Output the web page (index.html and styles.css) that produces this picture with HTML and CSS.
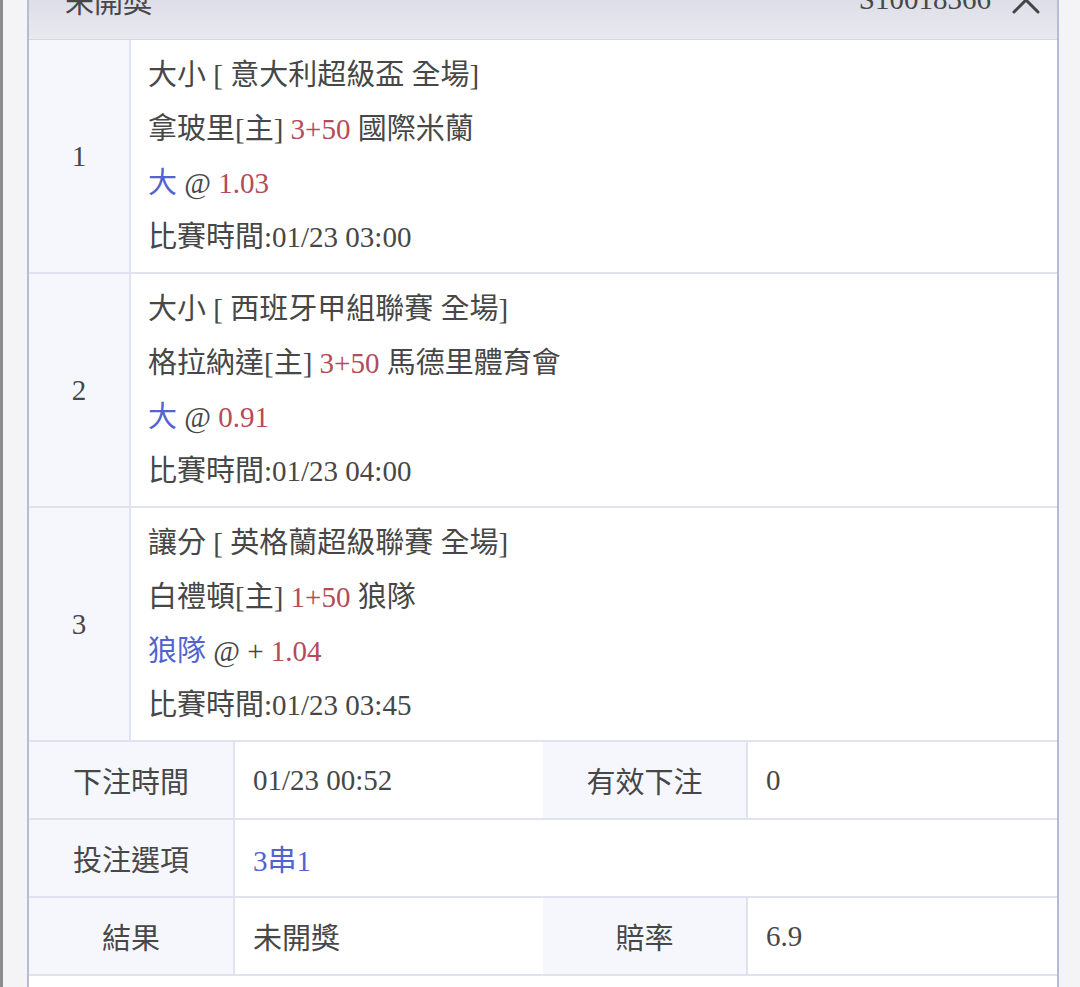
FILE: index.html
```html
<!DOCTYPE html><html lang="zh-Hant"><head><meta charset="UTF-8"/>
<meta name="viewport" content="width=device-width, initial-scale=1" />
<title>注單詳情</title>
<link rel="stylesheet" href="styles.css"></head><body>

<!-- 注單詳情面板 -->
<div class="sheet">
  <header class="sheet-head">
    <span class="head-status">未開獎</span>
    <span class="head-id">S10018366</span>
    <svg class="head-close" width="30" height="30" viewBox="0 0 30 30" aria-hidden="true">
      <path d="M3 3L27 27M27 3L3 27" stroke="#444" stroke-width="3" stroke-linecap="round" fill="none"/>
    </svg>
  </header>

  <!-- 串關賽事 -->
  <div class="match">
    <div class="match-no">1</div>
    <div class="match-body">
      <div>大小 [ 意大利超級盃 全場]</div>
      <div>拿玻里[主] <span class="red">3+50</span> 國際米蘭</div>
      <div><span class="blue">大</span> @ <span class="red">1.03</span></div>
      <div>比賽時間:01/23 03:00</div>
    </div>
  </div>
  <div class="match">
    <div class="match-no">2</div>
    <div class="match-body">
      <div>大小 [ 西班牙甲組聯賽 全場]</div>
      <div>格拉納達[主] <span class="red">3+50</span> 馬德里體育會</div>
      <div><span class="blue">大</span> @ <span class="red">0.91</span></div>
      <div>比賽時間:01/23 04:00</div>
    </div>
  </div>
  <div class="match">
    <div class="match-no">3</div>
    <div class="match-body">
      <div>讓分 [ 英格蘭超級聯賽 全場]</div>
      <div>白禮頓[主] <span class="red">1+50</span> 狼隊</div>
      <div><span class="blue">狼隊</span> @ + <span class="red">1.04</span></div>
      <div>比賽時間:01/23 03:45</div>
    </div>
  </div>

  <!-- 注單資訊 -->
  <div class="info">
    <div class="cell label">下注時間</div>
    <div class="cell value">01/23 00:52</div>
    <div class="cell label">有效下注</div>
    <div class="cell value">0</div>

    <div class="cell label">投注選項</div>
    <div class="cell value wide blue">3串1</div>

    <div class="cell label">結果</div>
    <div class="cell value">未開獎</div>
    <div class="cell label">賠率</div>
    <div class="cell value">6.9</div>
  </div>
  <div class="sheet-foot"></div>
</div>

</body></html>
```

FILE: styles.css
```css
/* ───── 기본 ───── */
*{box-sizing:border-box;margin:0;padding:0}
:root{--line:#e0e2f0;--side:#f6f7fc;--txt:#474747;--blue:#5263cf;--red:#b54b57}
body{font-family:"Liberation Serif","Noto Sans CJK TC",serif;font-size:29px;color:var(--txt);
     background:#f4f4f6;border-left:3px solid #8c8c8c;height:987px;overflow:hidden}
.blue{color:var(--blue)}
.red{color:var(--red)}
/* ───── 패널 ───── */
.sheet{margin:-40px 21px 0 24px;background:#fff;
       border-left:2px solid #b9bad3;border-right:2px solid #b9bad3}
.sheet-head{height:80px;display:flex;align-items:center;padding:0 16px 0 36px;
            background:linear-gradient(#d2d3e0,#e9e9f0);border-bottom:1px solid #d6d7e4}
.head-status{flex:1}
.head-id{margin-right:20px}
.head-close{display:block}
/* 경기 행 */
.match{display:grid;grid-template-columns:102px 1fr;border-bottom:2px solid var(--line)}
.match-no{background:var(--side);border-right:2px solid var(--line);
          display:flex;align-items:center;justify-content:center}
.match-body{padding:8px 17px 8px;line-height:54px}
/* 정보 표 */
.info{display:grid;grid-template-columns:206px 308px 205px 1fr}
.cell{height:78px;display:flex;align-items:center;border-bottom:2px solid var(--line)}
.label{background:var(--side);justify-content:center;border-right:2px solid var(--line)}
.value{padding-left:18px}
.wide{grid-column:2 / 5}
.sheet-foot{height:30px}
```
